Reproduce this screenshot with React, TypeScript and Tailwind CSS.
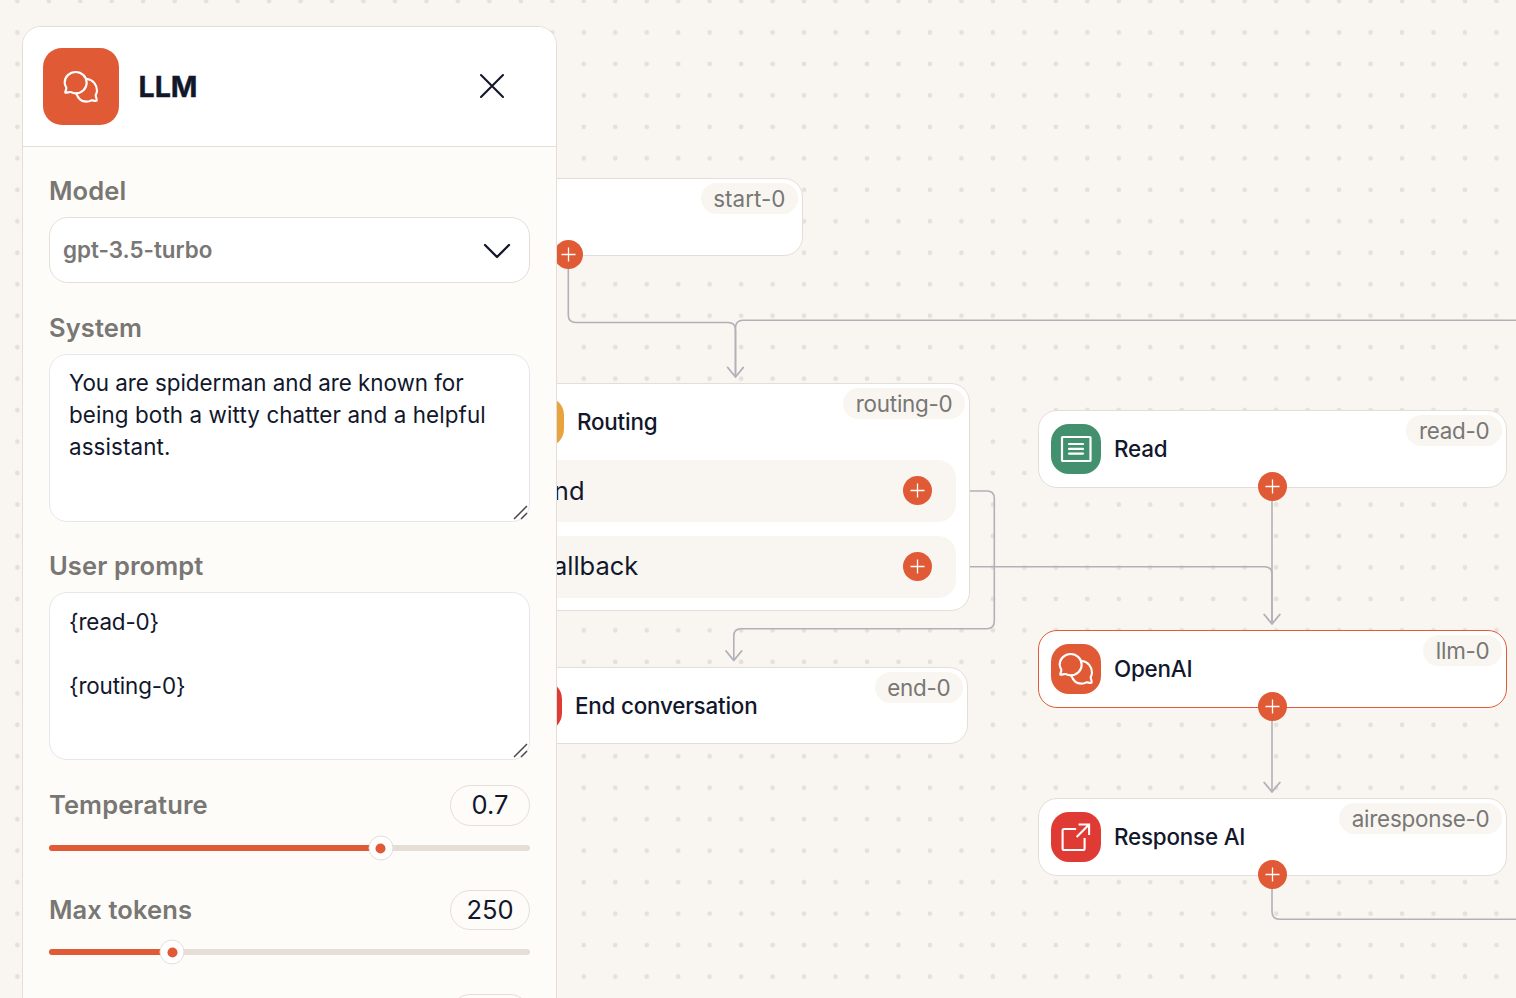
import React from "react";

const ResizeGrip = () => (
  <svg className="absolute right-px bottom-px h-[15px] w-[15px]" viewBox="0 0 15 15" fill="none" stroke="#4a4a4a" strokeWidth="1.5">
    <path d="M1 14 L14 1 M8 14 L14 8" />
  </svg>
);

const ChatIcon = () => (
  <svg
    width="34"
    height="32"
    viewBox="0 0 102 96"
    fill="none"
    stroke="#fff"
    strokeWidth="6.4"
    strokeLinecap="round"
    strokeLinejoin="round"
    className="shrink-0 overflow-visible"
  >
    <path d="M7 50 C4 44 2 40 2 35 A33 32 0 1 1 35 67 C29 67 24 65 20 63 C14 62 9 66 4 65 C2 62 8 57 7 50 Z" />
    <path d="M70 24 C88 27 99 42 99 59 C99 64 97 68 95 72 C95 78 99 83 98 89 C93 92 87 87 82 88 C77 91 72 92 67 92 C52 92 42 82 37 68" />
  </svg>
);

const Label = ({ children }: { children: React.ReactNode }) => (
  <div className="text-[25.5px] leading-8 font-semibold tracking-[0.1px] text-[#787774]">{children}</div>
);

const Field = ({ label, gap, children }: { label: string; gap: string; children: React.ReactNode }) => (
  <div className={"flex flex-col gap-[10px] " + gap}>
    <Label>{label}</Label>
    {children}
  </div>
);

const TextBox = ({ pad, children }: { pad: string; children: React.ReactNode }) => (
  <div className={"relative h-[168px] rounded-[18px] border border-[#e5e7eb] bg-white px-[19px] text-[22.4px] leading-8 whitespace-pre text-[#12172b] " + pad}>
    {children}
    <ResizeGrip />
  </div>
);

const Pill = ({ height, children }: { height: string; children?: React.ReactNode }) => (
  <div className={"flex w-20 shrink-0 items-center justify-center rounded-full border border-[#e5ded8] text-[25.5px] text-[#12172b] " + height}>
    {children}
  </div>
);

const SliderRow = ({ label, value, fill, gap, height }: { label: string; value: string; fill: number; gap: string; height: string }) => (
  <div className={gap}>
    <div className="flex items-start justify-between">
      <div className="pt-1">
        <Label>{label}</Label>
      </div>
      <Pill height={height}>{value}</Pill>
    </div>
    <div className="relative mt-[19px] h-[6px] rounded-full bg-[#e5ddd6]">
      <div className="h-full rounded-full bg-[#e05a35]" style={{ width: fill }} />
      <div
        className="absolute top-1/2 flex size-[25px] -translate-x-1/2 -translate-y-1/2 items-center justify-center rounded-full border border-[#e5ded8] bg-white"
        style={{ left: fill }}
      >
        <div className="size-[10px] rounded-full bg-[#e05a35]" />
      </div>
    </div>
  </div>
);

const Plus = ({ className }: { className: string }) => (
  <div className={"size-[29px] rounded-full bg-[#e05a35] " + className}>
    <svg viewBox="0 0 29 29" className="size-full" stroke="#fff" strokeWidth="1.3">
      <path d="M14.5 7.5 V21.5 M7.5 14.5 H21.5" />
    </svg>
  </div>
);

type NodeProps = {
  place: string;
  title: string;
  titleClass?: string;
  tag: string;
  tagClass?: string;
  border?: string;
  tile: string;
  icon?: React.ReactNode;
  plus?: boolean;
  children?: React.ReactNode;
};

const FlowNode = ({
  place,
  title,
  titleClass = "pb-px",
  tag,
  tagClass = "tracking-[-0.24px]",
  border = "border-[#e5ded8]",
  tile,
  icon,
  plus,
  children,
}: NodeProps) => (
  <div className={"absolute w-[469px] rounded-[19px] border bg-white " + border + " " + place}>
    <div className="flex h-[76px] items-center gap-[13px] pl-3">
      <div className={"flex size-[50px] items-center justify-center rounded-[18px] " + tile}>{icon}</div>
      <span className={"text-[22.4px] font-medium tracking-[-0.2px] text-[#12172b] " + titleClass}>{title}</span>
    </div>
    {children}
    <div className={"absolute top-1 right-1 flex h-[31px] items-center rounded-full bg-[#f9f6f1] px-[12.5px] text-[22.4px] text-[#787774] " + tagClass}>
      {tag}
    </div>
    {plus && <Plus className="absolute bottom-[-14px] left-[218.5px]" />}
  </div>
);

const Branch = ({ label, labelClass = "" }: { label: string; labelClass?: string }) => (
  <div className="flex h-[62px] items-center justify-between rounded-[18px] bg-[#f9f6f1] pr-[24.5px] pl-[24.5px] text-[25.5px] text-[#12172b]">
    <span className={labelClass}>{label}</span>
    <Plus className="mb-px shrink-0" />
  </div>
);

const Edges = () => (
  <svg className="absolute inset-0" width="1516" height="998" fill="none">
    <defs>
      <pattern id="dots" x="1.6" y="-14.7" width="31.47" height="31.47" patternUnits="userSpaceOnUse">
        <circle cx="15.73" cy="15.73" r="2.4" fill="#e4e0da" />
      </pattern>
    </defs>
    <rect width="1516" height="998" fill="url(#dots)" />
    <g stroke="#b1b1b7" strokeWidth="1.6">
      <path d="M568.3 266 V315 Q568.3 322.5 576 322.5 H728 Q735.5 322.5 735.5 330 V376" />
      <path d="M1516 320.3 H743 Q735.5 320.3 735.5 328 V376" />
      <path d="M970 491 H987 Q994.3 491 994.3 498.5 V621 Q994.3 628.7 987 628.7 H741 Q733.8 628.7 733.8 636 V660" />
      <path d="M970 566.7 H1264.5 Q1272 566.7 1272 574 V623" />
      <path d="M1272 500 V623" />
      <path d="M1272 720 V791" />
      <path d="M1272 888 V911.5 Q1272 919.3 1279.5 919.3 H1516" />
      <g strokeLinecap="round" strokeLinejoin="round" strokeWidth="1.9">
        <path d="M727.7 367.5 L735.5 377 L743.3 367.5" />
        <path d="M726 651 L733.8 660.5 L741.6 651" />
        <path d="M1264.2 614.5 L1272 624 L1279.8 614.5" />
        <path d="M1264.2 782.5 L1272 792 L1279.8 782.5" />
      </g>
    </g>
  </svg>
);

const ReadIcon = () => (
  <svg width="32" height="28" viewBox="0 0 32 28" fill="none" stroke="#fff" strokeWidth="2.2" strokeLinecap="round">
    <rect x="2" y="2" width="28.5" height="24" rx="0.6" />
    <path d="M9 9 H23 M9 13.9 H23 M9 18.6 H23" />
  </svg>
);

const ShareIcon = () => (
  <svg width="32" height="32" viewBox="0.9 0.5 32 32" fill="none" stroke="#fff" strokeWidth="2.1">
    <path d="M17 8.5 H5 Q3.5 8.5 3.5 10 V28 Q3.5 29.5 5 29.5 H24 Q25.5 29.5 25.5 28 V17.5" />
    <path d="M17.5 16.5 L29.5 4.5 M19.5 4 H30 V14.5" />
  </svg>
);

export default function App() {
  return (
    <div className="relative h-[998px] w-[1516px] overflow-hidden bg-[#f9f6f1] font-['Inter',sans-serif]">
      <Edges />
      <FlowNode place="top-[178px] left-[334px]" title="Start" tag="start-0" tagClass="tracking-[0.05px]" tile="bg-[#43906f]" plus />
      <FlowNode place="top-[383px] left-[501px] h-[228px]" title="Routing" tag="routing-0" tile="bg-[#e8a33f]">
        <div className="flex flex-col gap-[14px] pr-[13px] pl-3">
          <Branch label="End" />
          <Branch label="Fallback" labelClass="pb-0.5" />
        </div>
      </FlowNode>
      <FlowNode place="top-[667px] left-[499px] h-[77px]" title="End conversation" tag="end-0" tile="bg-[#e03a34]" />
      <FlowNode place="top-[410px] left-[1038px]" title="Read" titleClass="" tag="read-0" tile="bg-[#43906f]" icon={<ReadIcon />} plus />
      <FlowNode place="top-[630px] left-[1038px]" title="OpenAI" tag="llm-0" border="border-[#e05a35]" tile="bg-[#e05a35]" icon={<ChatIcon />} plus />
      <FlowNode place="top-[798px] left-[1038px]" title="Response AI" tag="airesponse-0" tile="bg-[#e03a34]" icon={<ShareIcon />} plus />

      <aside className="absolute top-[26px] left-[22px] h-[1020px] w-[535px] overflow-hidden rounded-[19px] border border-[#e5ded8] bg-[#fefcf8]">
        <header className="flex h-[120px] items-center border-b border-[#e5ded8] bg-white pr-[51px] pl-5">
          <div className="flex h-[77px] w-[76px] items-center justify-center rounded-[19px] bg-[#e05a35]">
            <ChatIcon />
          </div>
          <h1 className="ml-[19.5px] flex-1 text-[28.6px] leading-[42px] font-bold text-[#12172b] [-webkit-text-stroke:0.4px_#12172b]">LLM</h1>
          <svg className="mb-px" width="26" height="26" viewBox="0 0 26 26" stroke="#12172b" strokeWidth="2.1" strokeLinecap="round">
            <path d="M2 2 L24 24 M24 2 L2 24" />
          </svg>
        </header>
        <div className="px-[26px]">
          <Field label="Model" gap="pt-7">
            <div className="flex h-[66px] items-center justify-between rounded-[19px] border border-[#e5ded8] bg-white pr-[18px] pl-[13px] text-[22.4px] font-semibold text-[#787774]">
              gpt-3.5-turbo
              <svg className="mt-0.5" width="28" height="16" viewBox="0 0 28 16" fill="none" stroke="#12172b" strokeWidth="2.3" strokeLinecap="round" strokeLinejoin="round">
                <path d="M2 2 L14 14 L26 2" />
              </svg>
            </div>
          </Field>
          <Field label="System" gap="pt-[29px]">
            <TextBox pad="pt-3">
              <div className="tracking-[-0.05px]">You are spiderman and are known for</div>
              <div className="tracking-[0.1px]">being both a witty chatter and a helpful</div>
              <div className="tracking-[0.1px]">assistant.</div>
            </TextBox>
          </Field>
          <Field label="User prompt" gap="pt-7">
            <TextBox pad="pt-[13px] tracking-[-0.15px]">{"{read-0}\n\n{routing-0}"}</TextBox>
          </Field>
          <SliderRow label="Temperature" value="0.7" fill={331.5} gap="pt-[25px]" height="h-[41px]" />
          <SliderRow label="Max tokens" value="250" fill={123} gap="pt-[39px]" height="h-[40px]" />
          <div className="flex justify-end pt-[39px]">
            <Pill height="h-[40px]" />
          </div>
        </div>
      </aside>
    </div>
  );
}
